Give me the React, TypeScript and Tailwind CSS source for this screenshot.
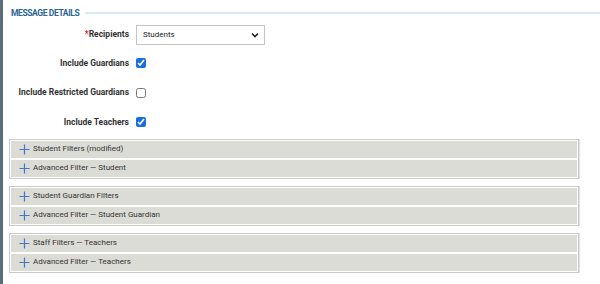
import React from "react";

const font = { fontFamily: 'Roboto, "Open Sans", sans-serif' };

function Plus() {
  return (
    <svg width="11" height="11" viewBox="0 0 11 11" className="shrink-0">
      <path d="M5.5 0.5V10.5M0.5 5.5H10.5" stroke="#4a74c4" strokeWidth="1.2" />
    </svg>
  );
}

function Group({ rows }: { rows: string[] }) {
  return (
    <div className="flex w-[570px] flex-col gap-[2px] border border-[#c9c9c9] bg-white p-px shadow-[1px_0_0_#e2e2e2]">
      {rows.map((r) => (
        <div key={r} className="flex h-[17px] items-center gap-[3px] bg-[#dcdcd6] pl-[8px] text-[8px] text-[#333]">
          <Plus />
          <span>{r}</span>
        </div>
      ))}
    </div>
  );
}

function CheckRow({ label, checked }: { label: string; checked: boolean }) {
  return (
    <div className="flex h-[29.5px] items-center gap-[7px]">
      <div className="w-[126px] text-right text-[8.5px] font-bold text-[#333]">{label}</div>
      <input type="checkbox" defaultChecked={checked} className="m-0 h-[10px] w-[10px] accent-[#1a6fe0]" />
    </div>
  );
}

export default function App() {
  return (
    <div style={font} className="flex h-[284px] w-[600px] flex-col overflow-hidden border-l-[3px] border-[#5d6c7b] bg-white">
      <div className="mt-[7px] flex items-center pl-[8px]">
        <span className="text-[8.5px] font-bold tracking-[-0.4px] text-[#2a6496]">MESSAGE DETAILS</span>
        <div className="ml-[6px] h-[2px] flex-1 bg-[#d5e9f7]" />
      </div>
      <div className="mt-[5px] flex h-[20px] items-center gap-[7px]">
        <div className="w-[126px] text-right text-[8.5px] font-bold text-[#333]">
          <span className="text-[#d9232d]">*</span>Recipients
        </div>
        <div className="flex h-[20px] w-[129px] items-center justify-between border border-[#c4c4c4] bg-white pl-[6px] pr-[5px] text-[8px] text-[#222]">
          <span>Students</span>
          <svg width="8" height="6" viewBox="0 0 8 6">
            <path d="M1 1.5L4 4.5L7 1.5" stroke="#222" strokeWidth="1.6" fill="none" />
          </svg>
        </div>
      </div>
      <div className="mt-[3.5px] flex flex-col">
        <CheckRow label="Include Guardians" checked />
        <CheckRow label="Include Restricted Guardians" checked={false} />
        <CheckRow label="Include Teachers" checked />
      </div>
      <div className="ml-[6px] mt-[2px] flex flex-col gap-[7px]">
        <Group rows={["Student Filters (modified)", "Advanced Filter \u2014 Student"]} />
        <Group rows={["Student Guardian Filters", "Advanced Filter \u2014 Student Guardian"]} />
        <Group rows={["Staff Filters \u2014 Teachers", "Advanced Filter \u2014 Teachers"]} />
      </div>
    </div>
  );
}
